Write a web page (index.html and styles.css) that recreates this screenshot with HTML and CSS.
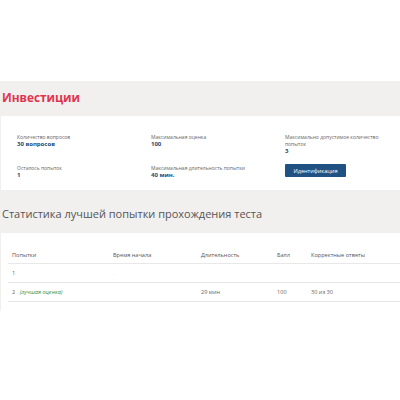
FILE: index.html
```html
<!DOCTYPE html>
<html lang="ru">
<head>
<meta charset="utf-8">
<link rel="stylesheet" href="styles.css">
</head>
<body>
<div class="top"></div>
<main class="page">
  <h1 class="title">Инвестиции</h1>
  <section class="card info">
    <div class="field">
      <div class="label">Количество вопросов</div>
      <div class="value">30 вопросов</div>
    </div>
    <div class="field">
      <div class="label">Максимальная оценка</div>
      <div class="value">100</div>
    </div>
    <div class="field">
      <div class="label wrap">Максимально допустимое количество попыток</div>
      <div class="value">3</div>
    </div>
    <div class="field">
      <div class="label">Осталось попыток</div>
      <div class="value">1</div>
    </div>
    <div class="field">
      <div class="label">Максимальная длительность попытки</div>
      <div class="value">40 мин.</div>
    </div>
    <div class="field">
      <button class="btn">Идентификация</button>
    </div>
  </section>
  <h2 class="subtitle">Статистика лучшей попытки прохождения теста</h2>
  <section class="card stats">
    <table class="table">
      <thead>
        <tr>
          <th class="c1">Попытки</th>
          <th class="c2">Время начала</th>
          <th class="c3">Длительность</th>
          <th class="c4">Балл</th>
          <th class="c5">Корректные ответы</th>
        </tr>
      </thead>
      <tbody>
        <tr>
          <td>1</td>
          <td><span class="dot">-</span></td>
          <td></td>
          <td><span class="dot">-</span></td>
          <td></td>
        </tr>
        <tr>
          <td>2 <span class="best">(лучшая оценка)</span></td>
          <td></td>
          <td>29 мин</td>
          <td>100</td>
          <td>30 из 30</td>
        </tr>
      </tbody>
    </table>
  </section>
</main>
</body>
</html>
```
FILE: styles.css
```css
html, body {
  margin: 0;
  padding: 0;
  background: #ffffff;
  font-family: "Open Sans", "Liberation Sans", sans-serif;
  color: #444;
}
.top {
  height: 81px;
}
.page {
  background: #f1f0ee;
  padding: 0 0 0 1px;
  overflow: hidden;
}
.title {
  margin: 0;
  padding: 7px 0 0 1px;
  height: 28px;
  box-sizing: border-box;
  font-size: 11.8px;
  line-height: 18px;
  font-weight: 700;
  color: #e0344f;
}
.card {
  background: #ffffff;
}
.info {
  margin-top: 7px;
  height: 74px;
  box-sizing: border-box;
  padding: 18px 0 0 16px;
  display: grid;
  grid-template-columns: 134px 134px 1fr;
  grid-template-rows: 31px 1fr;
}
.label {
  font-size: 5px;
  line-height: 7px;
  color: #666;
  white-space: nowrap;
}
.label.wrap {
  white-space: normal;
  width: 98px;
}
.value {
  font-size: 6px;
  line-height: 7px;
  font-weight: 700;
  color: #1d4a78;
}
.btn {
  display: block;
  margin-top: -1px;
  font-family: inherit;
  font-size: 5.6px;
  color: #fff;
  background: #1f5183;
  border: none;
  border-radius: 1px;
  width: 61px;
  height: 13px;
  padding: 0;
}
.subtitle {
  margin: 0;
  height: 43px;
  box-sizing: border-box;
  padding: 16px 0 0 1px;
  font-size: 11px;
  line-height: 16px;
  font-weight: 400;
  color: #555;
}
.stats {
  height: 78px;
  box-sizing: border-box;
  padding: 13px 0 0 7px;
}
.table {
  width: 100%;
  border-collapse: collapse;
  font-size: 5.6px;
  color: #666;
}
.table th {
  text-align: left;
  font-weight: 400;
  color: #555;
  height: 17px;
  padding: 0 0 0 4px;
  border-bottom: 1px solid #e8e8e8;
}
.table td {
  height: 18px;
  padding: 0 0 0 4px;
  border-bottom: 1px solid #e8e8e8;
}
.c1 { width: 97px; }
.c2 { width: 84px; }
.c3 { width: 72px; }
.c4 { width: 30px; }
.dot {
  color: #ccc;
  font-size: 4px;
}
.best {
  margin-left: 3px;
  font-style: italic;
  color: #3a8f3a;
}
```
